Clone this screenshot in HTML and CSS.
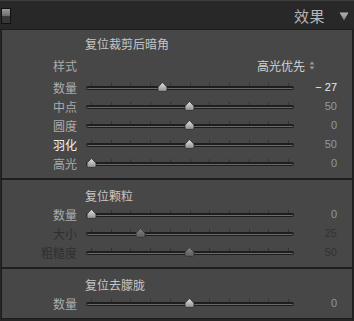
FILE: index.html
```html
<!DOCTYPE html>
<html lang="zh-CN">
<head>
<meta charset="utf-8">
<link rel="stylesheet" href="styles.css">
</head>
<body>
<svg class="defs" width="0" height="0" aria-hidden="true">
  <defs>
    <linearGradient id="thumbOn" x1="0" y1="0" x2="0" y2="1"><stop offset="0" stop-color="#e2e2e2"/><stop offset="1" stop-color="#8e8e8e"/></linearGradient>
    <linearGradient id="thumbOff" x1="0" y1="0" x2="0" y2="1"><stop offset="0" stop-color="#848484"/><stop offset="1" stop-color="#5a5a5a"/></linearGradient>
    <symbol id="thumbShape" viewBox="0 0 11 10"><path d="M5.5 0.6 C6.5 1.6 9.6 4.2 10 5.6 L10 8 Q10 9.4 8.6 9.4 L2.4 9.4 Q1 9.4 1 8 L1 5.6 C1.4 4.2 4.5 1.6 5.5 0.6 Z"/></symbol>
  </defs>
</svg>
<div class="app">
  <header class="hdr">
    <span class="switch"><span class="switch-top"></span></span>
    <span class="hdr-title">效果</span>
    <svg class="hdr-tri" width="10" height="9" viewBox="0 0 10 9"><defs><linearGradient id="tg" x1="0" y1="0" x2="0" y2="1"><stop offset="0" stop-color="#b4b4b4"/><stop offset="1" stop-color="#7c7c7c"/></linearGradient></defs><path d="M0.5 0.5 H9.5 L5 8.5 Z" fill="url(#tg)"/></svg>
  </header>

  <div class="panel">
    <section class="sec sec-first">
      <div class="title">复位裁剪后暗角</div>
      <div class="row row-style">
        <span class="lbl">样式</span>
        <span class="select">高光优先<svg class="updown" width="6" height="9" viewBox="0 0 6 9"><path d="M3 0.5 L5.5 3.5 H0.5 Z M3 8.5 L5.5 5.5 H0.5 Z" fill="#9a9a9a"/></svg></span>
      </div>
      <div class="row">
        <span class="lbl">数量</span>
        <div class="slider"><svg class="thumb" style="--p:0.365"><use href="#thumbShape"/></svg></div>
        <span class="val val-hot">− 27</span>
      </div>
      <div class="row">
        <span class="lbl">中点</span>
        <div class="slider"><svg class="thumb" style="--p:0.5"><use href="#thumbShape"/></svg></div>
        <span class="val">50</span>
      </div>
      <div class="row">
        <span class="lbl">圆度</span>
        <div class="slider"><svg class="thumb" style="--p:0.5"><use href="#thumbShape"/></svg></div>
        <span class="val">0</span>
      </div>
      <div class="row">
        <span class="lbl lbl-hot">羽化</span>
        <div class="slider"><svg class="thumb" style="--p:0.5"><use href="#thumbShape"/></svg></div>
        <span class="val">50</span>
      </div>
      <div class="row">
        <span class="lbl">高光</span>
        <div class="slider"><svg class="thumb" style="--p:0"><use href="#thumbShape"/></svg></div>
        <span class="val">0</span>
      </div>
    </section>

    <section class="sec">
      <div class="title">复位颗粒</div>
      <div class="row">
        <span class="lbl">数量</span>
        <div class="slider"><svg class="thumb" style="--p:0"><use href="#thumbShape"/></svg></div>
        <span class="val">0</span>
      </div>
      <div class="row row-off">
        <span class="lbl">大小</span>
        <div class="slider"><svg class="thumb" style="--p:0.25"><use href="#thumbShape"/></svg></div>
        <span class="val">25</span>
      </div>
      <div class="row row-off">
        <span class="lbl">粗糙度</span>
        <div class="slider"><svg class="thumb" style="--p:0.5"><use href="#thumbShape"/></svg></div>
        <span class="val">50</span>
      </div>
    </section>

    <section class="sec sec-last">
      <div class="title">复位去朦胧</div>
      <div class="row">
        <span class="lbl">数量</span>
        <div class="slider"><svg class="thumb" style="--p:0.5"><use href="#thumbShape"/></svg></div>
        <span class="val">0</span>
      </div>
    </section>
  </div>
</div>
</body>
</html>
```

FILE: styles.css
```css
html, body {
  margin: 0;
  padding: 0;
}
body {
  width: 354px;
  height: 321px;
  overflow: hidden;
  background: #262626;
  font-family: "Noto Sans CJK SC", "Noto Sans", sans-serif;
}
.defs {
  position: absolute;
  width: 0;
  height: 0;
}
.app {
  display: flex;
  flex-direction: column;
}
.hdr {
  height: 28px;
  border-top: 1px solid #3e3e3e;
  background: #282828;
  display: flex;
  align-items: center;
  padding: 0 5px 0 1px;
}
.switch {
  width: 8px;
  height: 14px;
  border: 1px solid #111;
  background: #383838;
  display: flex;
  flex-direction: column;
  margin-top: 1px;
}
.switch-top {
  height: 7px;
  background: linear-gradient(#9a9a9a, #6c6c6c);
}
.hdr-title {
  margin-left: auto;
  color: #b6b6b6;
  font-size: 15px;
  line-height: 18px;
  letter-spacing: 0.5px;
  margin-right: 14px;
  margin-top: 1px;
}
.hdr-tri {
  display: block;
  margin-top: 2px;
}
.panel {
  margin: 0 1px;
  border: 1px solid #1c1c1c;
  background: #474747;
}
.sec {
  padding: 6px 0 5px;
  border-bottom: 2px solid #1e1e1e;
}
.sec-first {
  padding-top: 4px;
}
.sec-last {
  border-bottom: none;
}
.title {
  height: 19px;
  line-height: 19px;
  padding-left: 83px;
  font-size: 12px;
  color: #c6c6c6;
}
.row {
  display: grid;
  grid-template-columns: 75px 208px 1fr;
  column-gap: 9px;
  height: 19px;
  align-items: center;
}
.row-style {
  display: flex;
  margin: 3px 0;
}
.lbl {
  text-align: right;
  font-size: 12px;
  line-height: 19px;
  color: #acacac;
  white-space: nowrap;
}
.row-style .lbl {
  width: 75px;
  flex: none;
}
.lbl-hot {
  color: #f2f2f2;
}
.select {
  margin-left: auto;
  margin-right: 37px;
  display: flex;
  align-items: center;
  font-size: 12px;
  line-height: 19px;
  color: #d2d2d2;
}
.updown {
  display: block;
  margin-left: 4px;
}
.val {
  text-align: right;
  padding-right: 15px;
  font-family: "Liberation Sans", "DejaVu Sans", sans-serif;
  font-size: 11px;
  line-height: 19px;
  color: #8e99a6;
}
.val-hot {
  color: #e6ecf2;
}
.slider {
  position: relative;
  height: 19px;
}
.slider::before {
  content: "";
  position: absolute;
  left: 5px;
  top: 5px;
  width: 198px;
  height: 3px;
  background: repeating-linear-gradient(to right, #333333 0 1px, transparent 1px 19.7px);
}
.slider::after {
  content: "";
  position: absolute;
  left: 0;
  right: 0;
  top: 8px;
  height: 4px;
  border-radius: 2px;
  box-sizing: border-box;
  border: 1px solid #1e1e1e;
  border-top-width: 2px;
  background: #6a6a6a;
}
.thumb {
  position: absolute;
  z-index: 1;
  top: 4px;
  left: calc(var(--p) * 197px - 0.5px);
  width: 11px;
  height: 10px;
  fill: url(#thumbOn);
  stroke: #2a2a2a;
  stroke-width: 0.8;
}
.row-off .lbl {
  color: #2f2f2f;
}
.row-off .val {
  color: #333333;
}
.row-off .thumb {
  fill: url(#thumbOff);
  stroke: #333;
}
```
